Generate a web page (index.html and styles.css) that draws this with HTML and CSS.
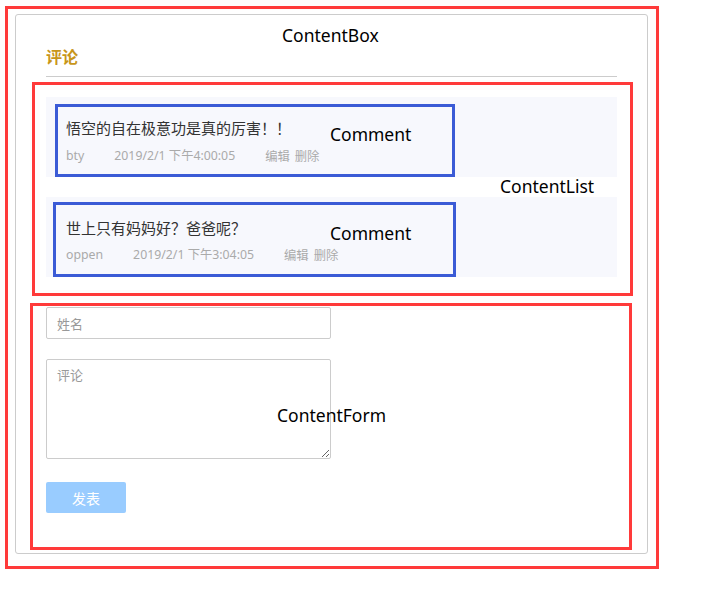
FILE: index.html
```html
<!DOCTYPE html>
<html lang="zh-CN">
<head>
<meta charset="utf-8">
<title>ContentBox</title>
<link rel="stylesheet" href="styles.css">
</head>
<body>
<div class="frame">
  <div class="content-box">
    <span class="label label-box">ContentBox</span>
    <h3 class="box-title">评论</h3>
    <div class="content-list">
      <div class="comment comment-1">
        <div class="anno anno-c1"></div>
        <span class="label label-comment">Comment</span>
        <p class="comment-text">悟空的自在极意功是真的厉害！！</p>
        <div class="comment-meta">
          <span class="author">bty</span>
          <span class="time">2019/2/1 下午4:00:05</span>
          <span class="action">编辑</span>
          <span class="action">删除</span>
        </div>
      </div>
      <div class="comment comment-2">
        <div class="anno anno-c2"></div>
        <span class="label label-comment">Comment</span>
        <p class="comment-text">世上只有妈妈好？爸爸呢？</p>
        <div class="comment-meta">
          <span class="author">oppen</span>
          <span class="time">2019/2/1 下午3:04:05</span>
          <span class="action">编辑</span>
          <span class="action">删除</span>
        </div>
      </div>
      <span class="label label-list">ContentList</span>
    </div>
    <form class="content-form">
      <input class="field field-name" type="text" placeholder="姓名">
      <textarea class="field field-text" placeholder="评论"></textarea>
      <button class="submit" type="button">发表</button>
      <span class="label label-form">ContentForm</span>
    </form>
  </div>
</div>
</body>
</html>
```
FILE: styles.css
```css
* { box-sizing: border-box; }
html, body { margin: 0; padding: 0; background: #fff; }
body {
  font-family: "Noto Sans", "Noto Sans CJK SC", sans-serif;
  color: #333;
}
.frame {
  width: 654px;
  margin: 6px 0 0 5px;
  border: 3px solid #ff3a3a;
  padding: 5px 8px 12px 7px;
}
.content-box {
  position: relative;
  width: 633px;
  border: 1px solid #ccc;
  border-radius: 3px;
  padding: 0 30px 0 30px;
  height: 540px;
}
.box-title {
  margin: 0;
  padding: 30px 0 9px;
  font-size: 16px;
  line-height: 22px;
  font-weight: bold;
  color: #c8961a;
  border-bottom: 1px solid #ccc;
  font-family: "Noto Sans CJK SC", sans-serif;
}
.label {
  position: absolute;
  font-family: "Noto Sans", "Open Sans", sans-serif;
  font-size: 17.5px;
  line-height: 24px;
  color: #000;
  white-space: nowrap;
}
.label-box { left: 266px; top: 8px; }
.content-list {
  position: relative;
  margin: 5px -16px 0 -14px;
  border: 3px solid #ff3a3a;
  padding: 12px 13px 16px 11px;
  display: flex;
  flex-direction: column;
  gap: 20px;
}
.label-list { left: 465px; top: 89px; }
.comment {
  position: relative;
  height: 80px;
  background: #f7f8fd;
  padding: 20px 20px 0;
}
.anno {
  position: absolute;
  border: 3px solid #3b5bd6;
}
.anno-c1 { left: 9px; top: 7px; width: 400px; height: 73px; }
.anno-c2 { left: 7px; top: 5px; width: 403px; height: 75px; }
.label-comment { left: 284px; top: 25px; }
.comment-2 .label-comment { top: 24px; }
.comment-text {
  margin: 0;
  font-family: "Noto Sans CJK SC", sans-serif;
  font-size: 15px;
  line-height: 22px;
  color: #333;
}
.comment-meta {
  margin-top: 7px;
  font-size: 12.3px;
  line-height: 20px;
  color: #aaa;
  display: flex;
}
.comment-2 .comment-meta { margin-top: 6px; }
.author, .time { margin-right: 30px; }
.action { margin-right: 5px; font-family: "Noto Sans CJK SC", sans-serif; }
.content-form {
  position: relative;
  margin: 7px -15px 0 -16px;
  border: 3px solid #ff3a3a;
  padding: 1px 13px 34px;
  display: flex;
  flex-direction: column;
  align-items: flex-start;
}
.field {
  width: 285px;
  border: 1px solid #ccc;
  border-radius: 2px;
  font-family: "Noto Sans CJK SC", sans-serif;
  font-size: 13px;
  color: #333;
  padding: 0 10px;
  outline: none;
}
.field::placeholder { color: #999; }
.field-name { height: 32px; }
.field-text {
  height: 100px;
  margin-top: 20px;
  padding-top: 5px;
  line-height: 20px;
  resize: vertical;
}
.submit {
  margin-top: 23px;
  width: 80px;
  height: 31px;
  border: none;
  border-radius: 2px;
  background: #99ccff;
  color: #fff;
  font-family: "Noto Sans CJK SC", sans-serif;
  font-size: 14px;
  padding: 0;
}
.label-form { left: 244px; top: 97px; }
```
